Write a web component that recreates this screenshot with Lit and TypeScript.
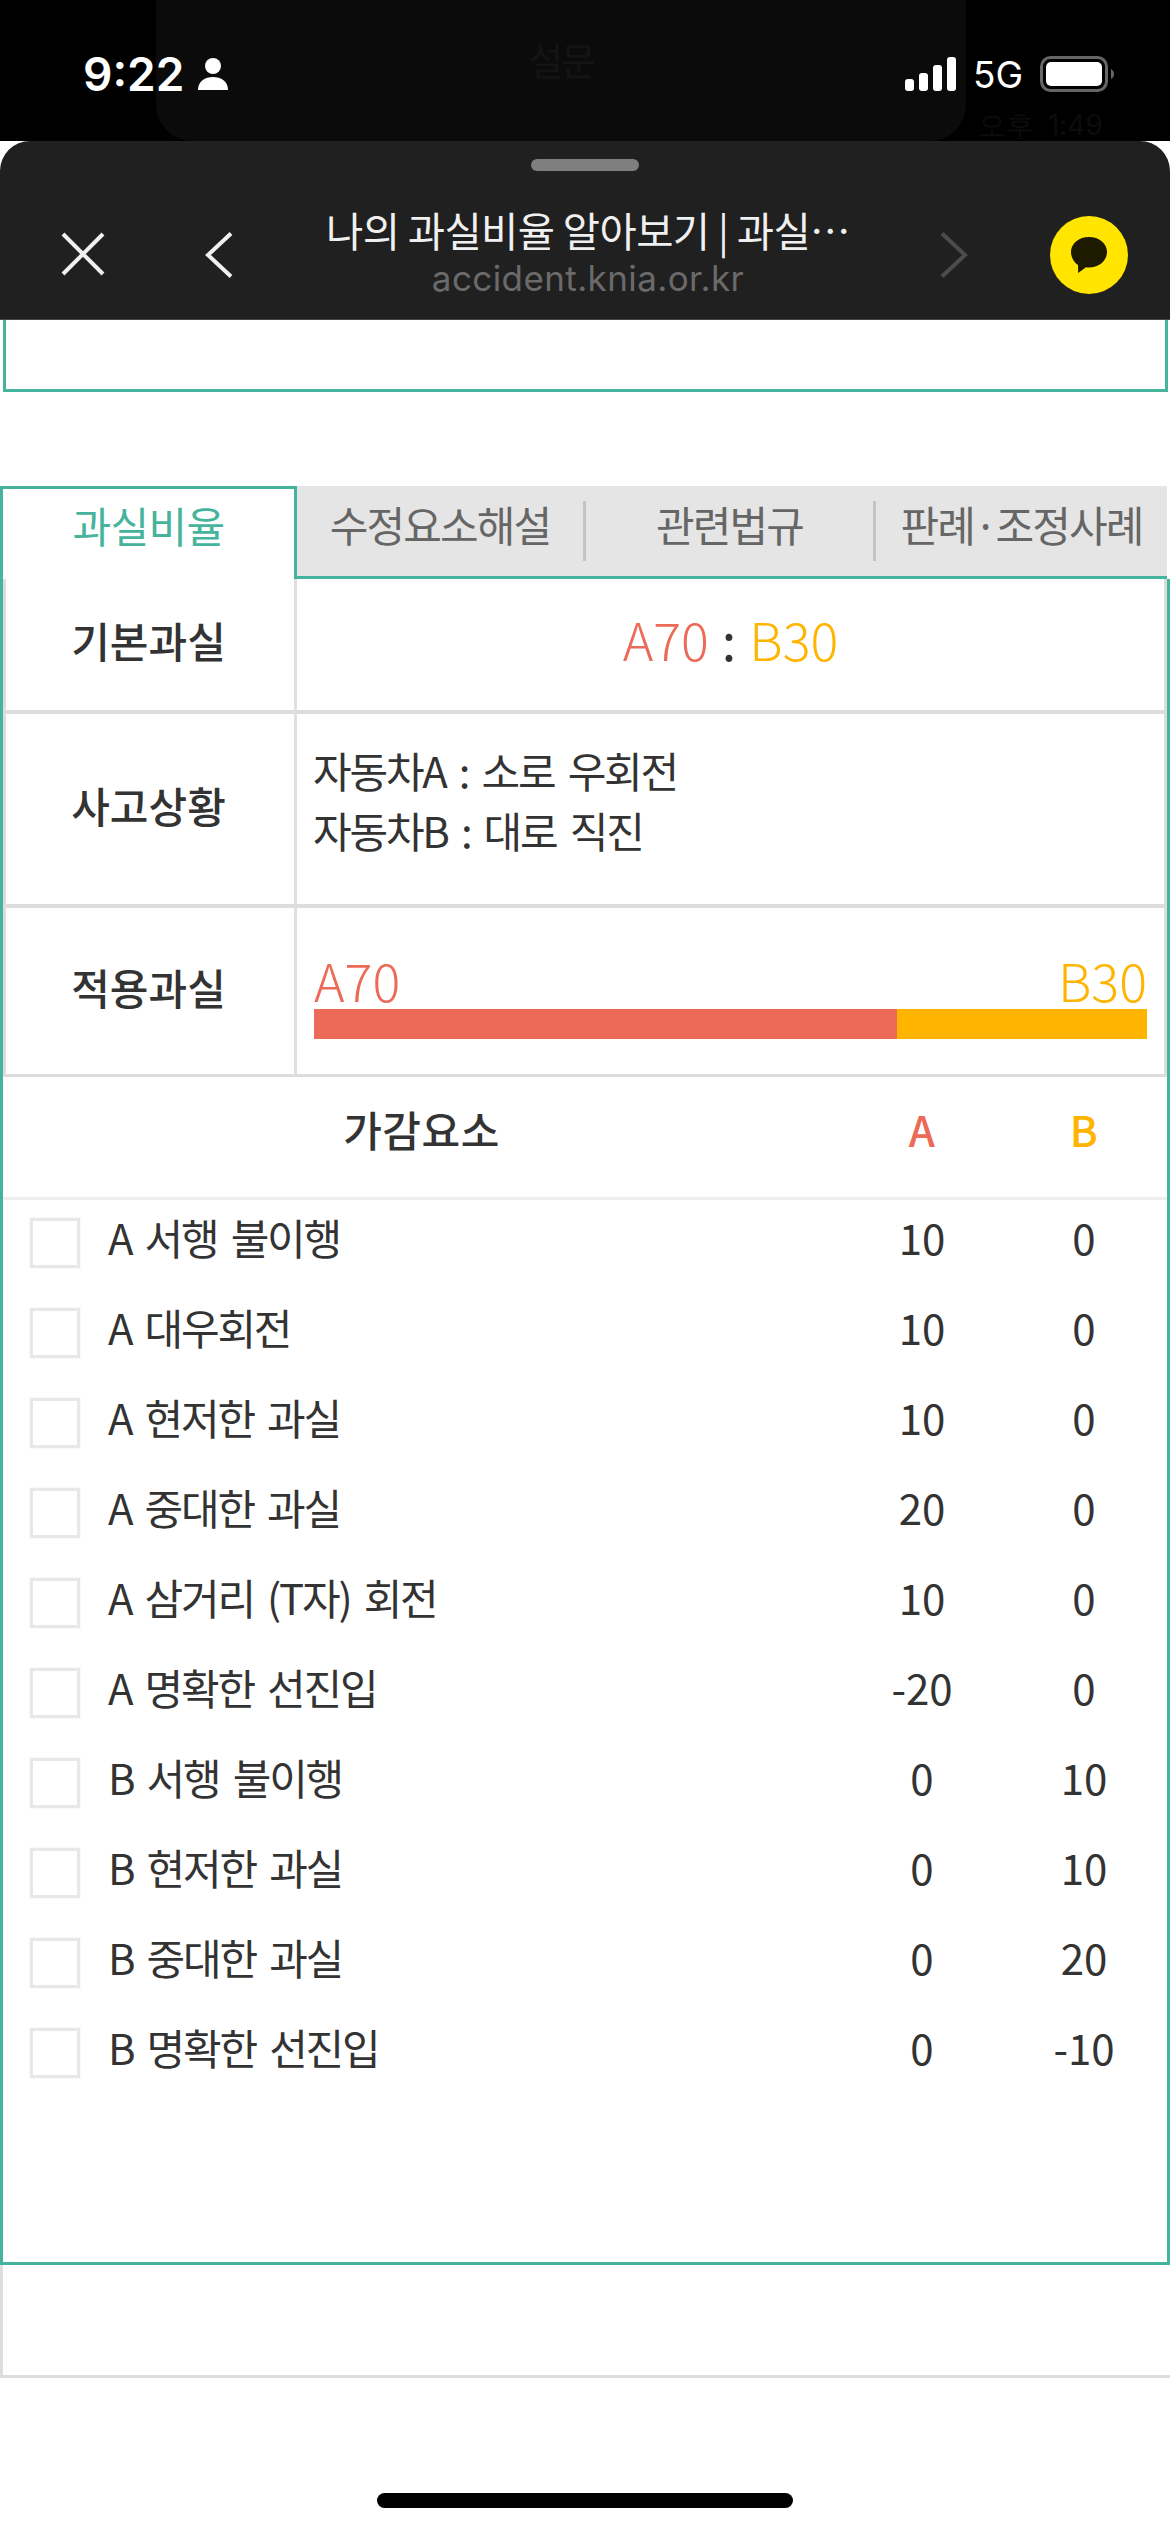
import { css, html, LitElement, svg } from 'lit';
import { customElement } from 'lit/decorators.js';

interface Factor {
  label: string;
  a: string;
  b: string;
}

const FACTORS: Factor[] = [
  { label: 'A 서행 불이행', a: '10', b: '0' },
  { label: 'A 대우회전', a: '10', b: '0' },
  { label: 'A 현저한 과실', a: '10', b: '0' },
  { label: 'A 중대한 과실', a: '20', b: '0' },
  { label: 'A 삼거리 (T자) 회전', a: '10', b: '0' },
  { label: 'A 명확한 선진입', a: '-20', b: '0' },
  { label: 'B 서행 불이행', a: '0', b: '10' },
  { label: 'B 현저한 과실', a: '0', b: '10' },
  { label: 'B 중대한 과실', a: '0', b: '20' },
  { label: 'B 명확한 선진입', a: '0', b: '-10' },
];

const TABS = [
  { label: '수정요소해설', width: 289 },
  { label: '관련법규', width: 290 },
  { label: '판례·조정사례', width: 291 },
];

const SIGNAL = [
  { x: 0, h: 12 },
  { x: 14, h: 18 },
  { x: 28, h: 26 },
  { x: 42, h: 34 },
];

@customElement('app-root')
export class AppRoot extends LitElement {
  static override styles = css`
    :host {
      display: block;
      width: 1170px;
      height: 2532px;
      background: #fff;
      overflow: hidden;
      font-family: 'Noto Sans CJK KR', 'Noto Sans', sans-serif;
      color: #333;
      font-size: 42px;
      letter-spacing: -2.2px;
      word-spacing: 6px;
    }

    /* status area */
    .top {
      position: relative;
      height: 141px;
      background: #000;
      overflow: hidden;
    }
    .ghost-panel {
      position: absolute;
      left: 156px;
      top: -30px;
      width: 810px;
      height: 171px;
      background: #0b0b0b;
      border-radius: 0 0 36px 36px;
    }
    .ghost-title {
      position: absolute;
      left: 0;
      right: 0;
      top: 62px;
      text-align: center;
      font-size: 38px;
      line-height: 54px;
      color: #141414;
    }
    .ghost-time {
      position: absolute;
      left: 978px;
      top: 110px;
      font-family: Inter, sans-serif;
      font-size: 28px;
      line-height: 30px;
      letter-spacing: 0;
      color: #0c0c0c;
    }
    .status {
      position: absolute;
      inset: 0;
      display: flex;
      justify-content: space-between;
      padding: 50px 56px 0 83px;
      font-family: Inter, sans-serif;
      color: #fff;
      letter-spacing: 0;
    }
    .status-left {
      display: flex;
      align-items: center;
      gap: 14px;
      height: 48px;
      font-size: 46px;
      font-weight: 600;
    }
    .status-right {
      display: flex;
      align-items: center;
      gap: 17px;
      height: 48px;
      font-size: 37px;
    }
    .status svg {
      display: block;
    }

    /* browser sheet */
    .sheet {
      position: relative;
      height: 179px;
      background: #202020;
      border-radius: 30px 30px 0 0;
      border-bottom: 1px solid #444;
      box-sizing: border-box;
    }
    .handle {
      position: absolute;
      left: 531px;
      top: 18px;
      width: 108px;
      height: 12px;
      border-radius: 6px;
      background: #7f7f7f;
    }
    .bar {
      display: grid;
      grid-template-columns: 315px 1fr 315px;
      height: 100%;
    }
    .bar-side {
      display: flex;
      align-items: flex-start;
      padding-top: 91px;
    }
    .bar-side svg {
      display: block;
      flex: none;
    }
    .close-icon {
      margin-left: 61px;
    }
    .back-icon {
      margin-left: 100px;
    }
    .forward-icon {
      margin-left: 85px;
    }
    .kakao-icon {
      margin: -16px 0 0 82px;
    }
    .bar-title {
      padding: 62px 0 0 6px;
      text-align: center;
    }
    .bar-title .name {
      font-size: 40.5px;
      line-height: 54px;
      color: #f0f0f0;
      white-space: nowrap;
      letter-spacing: -0.6px;
      word-spacing: 0;
    }
    .bar-title .host {
      font-family: Inter, sans-serif;
      font-size: 35px;
      line-height: 42px;
      color: #6a6a6a;
      letter-spacing: 0.4px;
      word-spacing: 0;
    }

    /* page under the sheet */
    .card-end {
      height: 72px;
      margin: 0 2px 0 3px;
      border: solid #46b49c;
      border-width: 0 3px 3px;
      box-sizing: border-box;
    }
    .spacer {
      height: 94px;
    }

    .tabs {
      display: flex;
      height: 93px;
      margin-right: 3px;
      background: #e5e5e5;
    }
    .tab {
      display: flex;
      align-items: center;
      justify-content: center;
      flex: none;
      box-sizing: border-box;
      height: 93px;
      color: #666;
      letter-spacing: -1.9px;
      border-bottom: 3px solid #46b49c;
    }
    .tab.active {
      width: 297px;
      padding-bottom: 20px;
      background: #fff;
      color: #46b49c;
      letter-spacing: -0.6px;
      border: 3px solid #46b49c;
      border-bottom: none;
    }
    .tab-label {
      display: flex;
      align-items: center;
      justify-content: center;
      box-sizing: border-box;
      width: 100%;
      height: 60px;
      padding-bottom: 16px;
      border-right: 3px solid #c4c4c4;
      white-space: nowrap;
    }
    .tab:last-child .tab-label {
      border-right: none;
    }

    .panel {
      height: 1686px;
      border: solid #46b49c;
      border-width: 0 3px 3px;
      box-sizing: border-box;
    }

    .summary {
      display: grid;
      grid-template-columns: 291px 1fr;
      border: solid #ddd;
      border-width: 0 3px 3px;
    }
    .summary > * {
      box-sizing: border-box;
    }
    .summary-head {
      display: flex;
      align-items: center;
      justify-content: center;
      padding: 0 3px 10px 0;
      border-right: 3px solid #e0e0e0;
      font-weight: 500;
      letter-spacing: 0;
    }
    .line {
      grid-column: 1 / -1;
      height: 4px;
      background: #ddd;
    }
    .row-base {
      height: 131px;
    }
    .row-case {
      height: 190px;
    }
    .row-applied {
      height: 166px;
    }
    .summary-body.ratio {
      display: flex;
      align-items: center;
      justify-content: center;
      gap: 13px;
      padding-bottom: 13px;
      font-size: 52px;
      font-weight: 300;
      letter-spacing: 0;
    }
    .colon {
      color: #333;
      font-weight: 400;
    }
    .a-color {
      color: #ec6a58;
    }
    .b-color {
      color: #ffb400;
    }
    .summary-body.case {
      display: flex;
      flex-direction: column;
      justify-content: center;
      padding: 0 0 18px 16px;
      line-height: 60px;
    }
    .summary-body.applied {
      padding: 44px 17px 0 17px;
    }
    .applied-labels {
      display: flex;
      justify-content: space-between;
      font-size: 52px;
      font-weight: 300;
      line-height: 56px;
      letter-spacing: 0;
    }
    .meter {
      display: flex;
      height: 30px;
      margin-top: 1px;
    }
    .meter-a {
      background: #ec6a58;
    }
    .meter-b {
      background: #ffb400;
    }

    .factor-head,
    .factor {
      display: grid;
      grid-template-columns: 837px 164px 160px;
      align-items: center;
      text-align: center;
    }
    .factor-head {
      height: 120px;
      padding-bottom: 17px;
      box-sizing: border-box;
      font-weight: 500;
      letter-spacing: 0.5px;
    }
    .factors {
      border-top: 3px solid #eee;
    }
    .factor {
      height: 90px;
      padding-bottom: 18px;
      box-sizing: border-box;
    }
    .factor-name {
      display: flex;
      align-items: center;
      gap: 28px;
      padding-left: 27px;
      text-align: left;
    }
    .check {
      flex: none;
      width: 50px;
      height: 50px;
      box-sizing: border-box;
      border: 3px solid #e8e8e8;
      box-shadow: 0 0 1px #ddd;
      margin-top: 14px;
    }
    .value {
      letter-spacing: 0;
    }

    .outer-end {
      height: 113px;
      border: solid #ddd;
      border-width: 0 0 3px 3px;
      box-sizing: border-box;
    }

    .home {
      width: 416px;
      height: 15px;
      margin: 115px auto 0;
      border-radius: 8px;
      background: #000;
    }
  `;

  override render() {
    return html`
      <div class="top">
        <div class="ghost-panel"><div class="ghost-title">설문</div></div>
        <div class="ghost-time">오후 1:49</div>
        <div class="status">
          <div class="status-left">
            <span>9:22</span>
            <svg width="30" height="32" viewBox="0 0 30 32" fill="#fff">
              <circle cx="15" cy="8" r="8" />
              <path d="M0 32c0-9 7-13 15-13s15 4 15 13z" />
            </svg>
          </div>
          <div class="status-right">
            <svg width="51" height="34" viewBox="0 0 51 34" fill="#fff">
              ${SIGNAL.map(
                (s) => svg`<rect x=${s.x} y=${34 - s.h} width="9" height=${s.h} rx="3" />`
              )}
            </svg>
            <span>5G</span>
            <svg width="74" height="36" viewBox="0 0 74 36">
              <rect x="1.5" y="1.5" width="65" height="33" rx="9" fill="none" stroke="#666" stroke-width="3" />
              <rect x="6" y="6" width="56" height="24" rx="5" fill="#fff" />
              <path d="M71 13c2 1 3 3 3 5s-1 4-3 5z" fill="#666" />
            </svg>
          </div>
        </div>
      </div>

      <div class="sheet">
        <div class="handle"></div>
        <div class="bar">
          <div class="bar-side">
            <svg class="close-icon" width="44" height="44" viewBox="0 0 44 44" stroke="#f0f0f0" stroke-width="4" fill="none">
              <path d="M2 2l40 40M42 2L2 42" />
            </svg>
            <svg class="back-icon" width="28" height="46" viewBox="0 0 28 46" stroke="#f0f0f0" stroke-width="4" fill="none">
              <path d="M26 1.5L3 23l23 21.5" />
            </svg>
          </div>
          <div class="bar-title">
            <div class="name">나의 과실비율 알아보기 | 과실…</div>
            <div class="host">accident.knia.or.kr</div>
          </div>
          <div class="bar-side">
            <svg class="forward-icon" width="28" height="46" viewBox="0 0 28 46" stroke="#4c4c4c" stroke-width="4" fill="none">
              <path d="M2 1.5L25 23 2 44.5" />
            </svg>
            <svg class="kakao-icon" width="78" height="78" viewBox="0 0 78 78">
              <circle cx="39" cy="39" r="39" fill="#ffe500" />
              <path
                d="M39 21c10 0 18 6.300 18 15s-8 15.500-18 15.500c-1 0-2 0-3-.2l-7.800 5.700-.2-8C23.800 46.300 21 41.500 21 36c0-8.700 8-15 18-15z"
                fill="#1e1a00"
              />
            </svg>
          </div>
        </div>
      </div>

      <div class="card-end"></div>
      <div class="spacer"></div>

      <div class="tabs">
        <div class="tab active">과실비율</div>
        ${TABS.map(
          (t) => html`<div class="tab" style="width:${t.width}px"><div class="tab-label">${t.label}</div></div>`
        )}
      </div>

      <div class="panel">
        <div class="summary">
          <div class="summary-head row-base">기본과실</div>
          <div class="summary-body ratio row-base">
            <span class="a-color">A70</span><span class="colon">:</span><span class="b-color">B30</span>
          </div>
          <div class="line"></div>
          <div class="summary-head row-case">사고상황</div>
          <div class="summary-body case row-case">
            <div>자동차A : 소로 우회전</div>
            <div>자동차B : 대로 직진</div>
          </div>
          <div class="line"></div>
          <div class="summary-head row-applied">적용과실</div>
          <div class="summary-body applied row-applied">
            <div class="applied-labels">
              <span class="a-color">A70</span><span class="b-color">B30</span>
            </div>
            <div class="meter">
              <div class="meter-a" style="width:70%"></div>
              <div class="meter-b" style="width:30%"></div>
            </div>
          </div>
        </div>

        <div class="factor-head">
          <div>가감요소</div>
          <div class="a-color">A</div>
          <div class="b-color">B</div>
        </div>
        <div class="factors">
          ${FACTORS.map(
            (f) => html`
              <div class="factor">
                <div class="factor-name"><span class="check"></span><span>${f.label}</span></div>
                <div class="value">${f.a}</div>
                <div class="value">${f.b}</div>
              </div>
            `
          )}
        </div>
      </div>

      <div class="outer-end"></div>
      <div class="home"></div>
    `;
  }
}
